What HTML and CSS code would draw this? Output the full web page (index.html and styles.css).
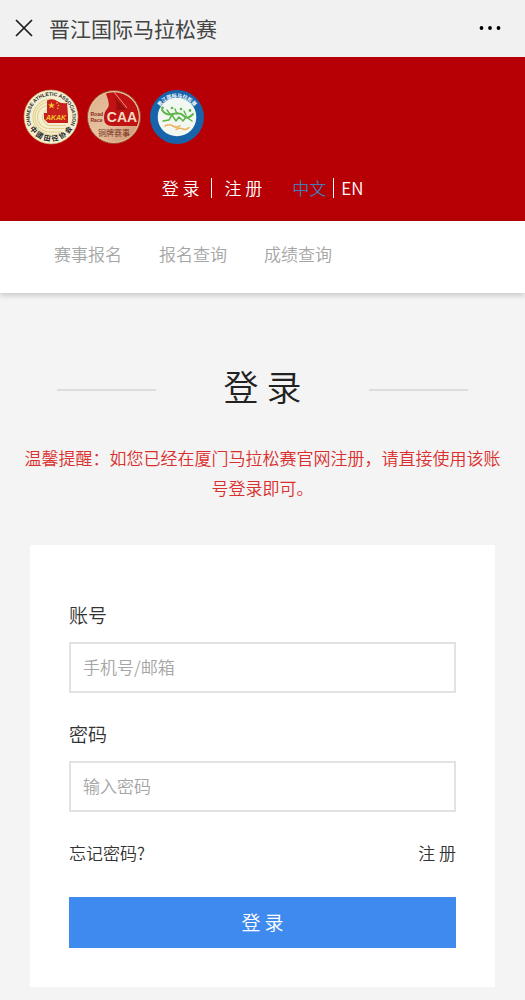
FILE: index.html
```html
<!DOCTYPE html>
<html lang="zh-CN">
<head>
  <meta charset="UTF-8" />
  <meta name="viewport" content="width=device-width, initial-scale=1.0"/>
  <title>晋江国际马拉松赛</title>
  <link rel="stylesheet" href="styles.css">
</head>
<body>

  <div class="topbar">
    <button type="button" class="icon-btn" aria-label="关闭">
      <svg width="18" height="18" viewBox="0 0 18 18"><path d="M1 1L17 17M17 1L1 17" stroke="#1a1a1a" stroke-width="1.7" fill="none"/></svg>
    </button>
    <span class="topbar-title">晋江国际马拉松赛</span>
    <button type="button" class="icon-btn" aria-label="更多">
      <svg width="22" height="6" viewBox="0 0 22 6"><circle cx="2.5" cy="3" r="1.9"/><circle cx="11" cy="3" r="1.9"/><circle cx="19.5" cy="3" r="1.9"/></svg>
    </button>
  </div>

  <header class="header">
    <div class="logos">
      <svg class="logo" viewBox="0 0 56 56">
        <defs>
          <path id="caaTop" d="M8.5 36.5A21.3 21.3 0 1 1 47.5 36.5"/>
          <path id="caaBottom" d="M4.5 34A24.3 24.3 0 0 0 51.5 34"/>
        </defs>
        <circle cx="28" cy="28" r="27" fill="#f4efd2" stroke="#c9a860" stroke-width="0.6"/>
        <g fill="none" stroke="#e3d08a" stroke-width="1.1">
          <path d="M28 10A18 18 0 0 0 28 46H33"/>
          <path d="M27 13A15 15 0 0 0 27 43H38"/>
          <path d="M26 16.5A11.5 11.5 0 0 0 26 39.5H41"/>
          <path d="M26 20A8.5 8.5 0 0 0 26 36.5H43"/>
        </g>
        <path d="M24 11.5Q30 9 34 12T44 14L45 26V34H25L21 30V24H24Z" fill="#c8201c"/>
        <path d="M28.5 13L29.5 15.5H32L30 17L30.8 19.5L28.5 18L26.2 19.5L27 17L25 15.5H27.5Z" fill="#f3c530"/>
        <g fill="#f3c530"><circle cx="34" cy="14" r="0.8"/><circle cx="35.6" cy="16.5" r="0.8"/><circle cx="34.8" cy="19.3" r="0.8"/></g>
        <text x="33" y="31" class="logo-kuk" text-anchor="middle">AKAK</text>
        <text class="logo-ring" font-size="5"><textPath href="#caaTop" startOffset="50%" text-anchor="middle">CHINESE ATHLETIC ASSOCIATION</textPath></text>
        <text class="logo-ring" font-size="7"><textPath href="#caaBottom" startOffset="50%" text-anchor="middle">中 國 田 径 协 会</textPath></text>
      </svg>
      <svg class="logo" viewBox="0 0 56 56">
        <defs>
          <linearGradient id="bronze" x1="0" y1="0" x2="1" y2="1">
            <stop offset="0" stop-color="#dcae88"/>
            <stop offset="0.5" stop-color="#e6c3a2"/>
            <stop offset="1" stop-color="#c98a68"/>
          </linearGradient>
          <clipPath id="medal"><circle cx="28" cy="28" r="25"/></clipPath>
        </defs>
        <circle cx="28" cy="28" r="26.5" fill="url(#bronze)" stroke="#9d4a2e" stroke-width="1"/>
        <g clip-path="url(#medal)">
          <path d="M20 0H56V37H26Q18 37 18 29Q18 23 21 20Q25 17 20 5Z" fill="#c01212"/>
          <path d="M24 3L40 21H30Q33 12 24 3Z" fill="#960e0e"/>
          <path d="M28 3L41 19" stroke="#e59a86" stroke-width="1" fill="none"/>
        </g>
        <circle cx="28" cy="28" r="25.3" fill="none" stroke="#eac5a1" stroke-width="0.8"/>
        <text x="4.5" y="27" class="logo-road">Road</text>
        <text x="4.5" y="33" class="logo-road">Race</text>
        <text x="36" y="33" class="logo-caa" text-anchor="middle">CAA</text>
        <text x="28" y="46.5" class="logo-medal" text-anchor="middle">铜牌赛事</text>
      </svg>
      <svg class="logo" viewBox="0 0 56 56">
        <defs><path id="jjTop" d="M7.5 25A21 21 0 0 1 48.5 25"/></defs>
        <circle cx="28" cy="28" r="27" fill="#1764ab"/>
        <circle cx="28" cy="28" r="19.3" fill="#f2f8f1"/>
        <text class="logo-city" font-size="5"><textPath href="#jjTop" startOffset="50%" text-anchor="middle">晋江国际马拉松赛</textPath></text>
        <g fill="none" stroke="#5cb548" stroke-linecap="round" stroke-linejoin="round">
          <path d="M13 21Q17 27 24 25T35 27T44 25" stroke-width="2"/>
          <path d="M14 32L20 31L23 26L27 32L30 28L34 32L37 28L43 32" stroke-width="1.5"/>
          <path d="M18 21L21 25M26 20L28 25M35 22L37 26" stroke-width="1.4"/>
        </g>
        <g fill="#5cb548"><circle cx="13.5" cy="19" r="1.4"/><circle cx="23" cy="19" r="1.3"/><circle cx="32" cy="20" r="1.3"/><circle cx="41" cy="21.5" r="1.4"/></g>
        <path d="M16 37Q20 34.5 24 37T31 36.5M27 40.5Q31 38.5 34 40T40 38.5" fill="none" stroke="#eeb164" stroke-width="1.5" stroke-linecap="round"/>
      </svg>
    </div>
    <div class="header-links">
      <div class="link-pair">
        <a href="#">登 录</a>
        <a href="#">注 册</a>
      </div>
      <div class="link-pair lang">
        <a href="#" class="active">中文</a>
        <a href="#">EN</a>
      </div>
    </div>
  </header>

  <nav class="nav">
    <a href="#">赛事报名</a>
    <a href="#">报名查询</a>
    <a href="#">成绩查询</a>
  </nav>

  <main>
    <h1>登 录</h1>
    <p class="tip">温馨提醒：如您已经在厦门马拉松赛官网注册，请直接使用该账号登录即可。</p>

    <form class="card">
      <label for="account">账号</label>
      <input type="text" id="account" placeholder="手机号/邮箱" />
      <label for="password">密码</label>
      <input type="password" id="password" placeholder="输入密码" />
      <div class="form-links">
        <a href="#">忘记密码?</a>
        <a href="#">注 册</a>
      </div>
      <button type="submit" class="submit">登 录</button>
    </form>
  </main>

</body>
</html>
```
FILE: styles.css
```css
* {
  box-sizing: border-box;
}

body {
  margin: 0;
  background: #f4f4f4;
  color: #333;
  font-family: "Noto Sans CJK SC", sans-serif;
  font-size: 17px;
  font-weight: 350;
  line-height: 30px;
}

a {
  color: inherit;
  text-decoration: none;
}

.topbar {
  display: flex;
  align-items: center;
  height: 57px;
  padding: 0 24px 2px 15px;
  background: #f1f1f1;
}

.topbar-title {
  flex: 1;
  margin-left: 16px;
  font-size: 21px;
  font-weight: 400;
  color: #444;
}

.icon-btn {
  display: flex;
  padding: 0;
  border: none;
  background: none;
  cursor: pointer;
}

.header {
  padding: 32px 23px 18px;
  background: #b60005;
  color: #fff;
}

.logos {
  display: flex;
  gap: 7px;
}

.logo {
  width: 56px;
  height: 56px;
}

.logo-ring {
  font-family: "Liberation Sans", "Noto Sans CJK SC", sans-serif;
  font-weight: bold;
  fill: #222;
}

.logo-kuk {
  font: italic bold 7px "Liberation Sans", sans-serif;
  fill: #f3c530;
}

.logo-road {
  font: bold 5px "Liberation Sans", sans-serif;
  fill: #8d2a1a;
}

.logo-caa {
  font: bold 14px "Liberation Sans", sans-serif;
  fill: #f3dcc3;
}

.logo-medal {
  font-size: 8px;
  font-weight: 400;
  fill: #75301c;
}

.logo-city {
  font-weight: bold;
  fill: #fff;
}

.header-links {
  display: flex;
  justify-content: center;
  align-items: center;
  gap: 30px;
  height: 30px;
  margin-top: 28px;
}

.link-pair {
  display: flex;
  align-items: center;
}

.link-pair a {
  line-height: 20px;
}

.link-pair a + a {
  margin-left: 12px;
  padding-left: 12px;
  border-left: 1px solid #fff;
}

.lang a + a {
  margin-left: 7px;
  padding-left: 7px;
}

.lang .active {
  color: #4a7ab5;
}

.nav {
  display: flex;
  gap: 37px;
  padding: 18px 54px 24px;
  background: #fff;
  color: #a5a5a5;
  box-shadow: 0 2px 6px rgba(0,0,0,0.2);
}

h1 {
  display: flex;
  align-items: center;
  gap: 68px;
  margin: 0;
  padding: 67px 57px 31px;
  font-size: 35px;
  font-weight: 350;
  line-height: 52px;
  color: #222;
}

h1::before,
h1::after {
  content: "";
  flex: 1;
  height: 2px;
  margin-top: 8px;
  background: #ddd;
}

.tip {
  margin: 0;
  padding: 0 24px;
  text-align: center;
  color: #d9302f;
}

.card {
  margin: 42px 30px 12px;
  padding: 55px 39px 39px;
  background: #fff;
}

.card label {
  display: block;
  margin-bottom: 12px;
  font-size: 19px;
}

.card input {
  display: block;
  width: 100%;
  height: 51px;
  margin-bottom: 26px;
  padding: 0 12px 3px;
  border: 2px solid #e2e2e2;
  background: #fff;
  font: inherit;
}

.card input::placeholder {
  color: #a5a5a5;
}

.form-links {
  display: flex;
  justify-content: space-between;
  margin-bottom: 29px;
}

.submit {
  display: block;
  width: 100%;
  height: 51px;
  padding: 0 0 2px;
  border: none;
  background: #3f8aee;
  color: #fff;
  font: inherit;
  font-size: 19px;
  cursor: pointer;
}
```
